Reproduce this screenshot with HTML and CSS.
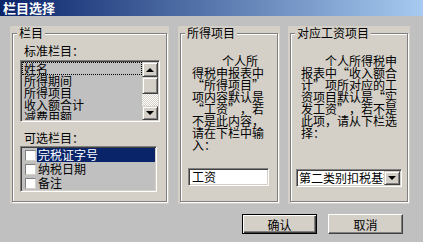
FILE: index.html
```html
<!DOCTYPE html>
<html lang="zh-CN">
<head>
    <meta charset="UTF-8">
    <title>栏目选择</title>
    <link rel="stylesheet" href="styles.css">
</head>
<body>
<div class="window">
    <!-- Barra de título -->
    <div class="titlebar">栏目选择</div>

    <div class="panels">
        <!-- 栏目 -->
        <div class="panel panel-columns">
            <div class="group">
                <span class="legend">栏目</span>
                <div class="label">标准栏目：</div>
                <div class="listbox">
                    <ul class="items">
                        <li class="focus">姓名</li>
                        <li>所得期间</li>
                        <li>所得项目</li>
                        <li>收入额合计</li>
                        <li>减费用额</li>
                    </ul>
                    <div class="scrollbar">
                        <div class="sb-btn sb-up"><span class="arrow-up"></span></div>
                        <div class="sb-thumb"></div>
                        <div class="sb-track"></div>
                        <div class="sb-btn sb-down"><span class="arrow-down"></span></div>
                    </div>
                </div>
                <div class="label label-optional">可选栏目：</div>
                <div class="checklist">
                    <div class="check-item selected"><span class="box"></span><span class="check-text">完税证字号</span></div>
                    <div class="check-item"><span class="box"></span><span class="check-text">纳税日期</span></div>
                    <div class="check-item"><span class="box"></span><span class="check-text">备注</span></div>
                </div>
            </div>
        </div>

        <!-- 所得项目 -->
        <div class="panel panel-income">
            <div class="group">
                <span class="legend">所得项目</span>
                <p class="notes notes-income">个人所<br>得税申报表中<br><span class="qo">“</span>所得项目<span class="qc">”</span><br>项内容默认是<br><span class="qo">“</span>工资<span class="qc">”</span>，若<br>不是此内容，<br>请在下栏中输<br>入：</p>
                <div class="text-input">工资</div>
            </div>
        </div>

        <!-- 对应工资项目 -->
        <div class="panel panel-wage">
            <div class="group">
                <span class="legend">对应工资项目</span>
                <p class="notes notes-wage">个人所得税申<br>报表中<span class="qo">“</span>收入额合<br>计<span class="qc">”</span>项所对应的工<br>资项目默认是<span class="qo">“</span>实<br>发工资<span class="qc">”</span>，若不是<br>此项，请从下栏选<br>择：</p>
                <div class="combo">
                    <span class="combo-text">第二类别扣税基数</span>
                    <span class="combo-btn"><span class="arrow-down"></span></span>
                </div>
            </div>
        </div>
    </div>

    <!-- Botões -->
    <div class="actions">
        <button class="btn btn-default">确认</button>
        <button class="btn">取消</button>
    </div>
</div>
</body>
</html>
```

FILE: styles.css
```css
/* Geral */
body {
    margin: 0;
    background-color: #c0c0c0;
    font-family: "Noto Sans CJK SC", "Liberation Sans", sans-serif;
    font-size: 12px;
    line-height: 12px;
    color: #000;
}

.window {
    width: 423px;
    height: 242px;
    overflow: hidden;
}

.titlebar {
    height: 16px;
    line-height: 16px;
    padding-left: 3px;
    background: linear-gradient(to right, #0a246a, #a6caf0);
    color: #fff;
    font-size: 13px;
    font-weight: bold;
}

/* Painéis */
.panels {
    display: flex;
    margin-top: 10px;
    padding-left: 10px;
    height: 178px;
}

.panel {
    display: flex;
    box-sizing: border-box;
    background-color: #d4d0c8;
    padding: 7px 2px 2px 2px;
}

.panel-columns {
    width: 159px;
}

.panel-income {
    width: 102px;
    margin-left: 9px;
}

.panel-wage {
    width: 122px;
    margin-left: 8px;
}

.group {
    flex: 1;
    display: flex;
    flex-direction: column;
    align-items: flex-start;
    border: 1px solid #808080;
    box-shadow: inset 1px 1px 0 #fff, 1px 1px 0 #fff;
}

.legend {
    margin: -8px 0 0 4px;
    padding: 0 2px;
    line-height: 13px;
    background-color: #d4d0c8;
}

.label {
    margin: 6px 0 0 11px;
}

.label-optional {
    margin-top: 10px;
}

/* Campos afundados */
.listbox, .checklist, .text-input, .combo {
    box-sizing: border-box;
    border: 1px solid;
    border-color: #808080 #fff #fff #808080;
    box-shadow: inset 1px 1px 0 #404040, inset -1px -1px 0 #d4d0c8;
    padding: 1px;
}

.listbox {
    display: flex;
    margin: 3px 0 0 7px;
    width: 140px;
    height: 62px;
    background-color: #c0c0c0;
}

.items {
    flex: 1;
    list-style: none;
    margin: 0;
    padding: 0;
    overflow: hidden;
}

.items li {
    height: 12px;
    padding-left: 2px;
    white-space: nowrap;
}

.items li.focus {
    outline: 1px dotted #000;
    outline-offset: -1px;
    height: 13px;
    line-height: 13px;
}

/* Barra de rolagem */
.scrollbar {
    width: 16px;
    display: flex;
    flex-direction: column;
}

.sb-btn, .sb-thumb, .combo-btn {
    box-sizing: border-box;
    display: flex;
    align-items: center;
    justify-content: center;
    background-color: #d4d0c8;
    border: 1px solid;
    border-color: #d4d0c8 #404040 #404040 #d4d0c8;
    box-shadow: inset 1px 1px 0 #fff, inset -1px -1px 0 #808080;
}

.sb-up {
    height: 15px;
}

.sb-thumb {
    height: 17px;
}

.sb-track {
    flex: 1;
    background: repeating-conic-gradient(#d4d0c8 0 25%, #fff 0 50%) 0 0 / 2px 2px;
}

.sb-down {
    height: 14px;
}

.arrow-up, .arrow-down {
    width: 0;
    height: 0;
    border-left: 4px solid transparent;
    border-right: 4px solid transparent;
}

.arrow-up {
    border-bottom: 4px solid #000;
}

.arrow-down {
    border-top: 4px solid #000;
}

/* Lista de seleção */
.checklist {
    margin: 2px 0 0 7px;
    width: 137px;
    height: 46px;
    background-color: #c0c0c0;
}

.check-item {
    display: flex;
    align-items: center;
    height: 14px;
}

.box {
    box-sizing: border-box;
    width: 11px;
    height: 11px;
    margin: 0 1px 0 3px;
    background-color: #fff;
    border: 1px solid;
    border-color: #808080 #d4d0c8 #d4d0c8 #808080;
}

.check-text {
    flex: 1;
    height: 14px;
    line-height: 14px;
    padding-left: 1px;
}

.selected .check-text {
    background-color: #0a246a;
    color: #fff;
}

/* Textos explicativos */
.notes {
    margin: 16px 0 0 11px;
    white-space: nowrap;
}

/* aspas de largura inteira */
.qo, .qc {
    display: inline-block;
    width: 12px;
    text-indent: 0;
}

.qo {
    text-align: right;
}

.qc {
    text-align: left;
}

.notes-income {
    text-indent: 30px;
}

.notes-wage {
    margin-left: 10px;
    text-indent: 24px;
}

.text-input {
    margin: 17px 0 0 7px;
    width: 81px;
    height: 18px;
    padding-left: 3px;
    line-height: 14px;
    background-color: #fff;
}

.combo {
    display: flex;
    margin: 30px 0 0 5px;
    width: 106px;
    height: 18px;
    background-color: #fff;
}

.combo-text {
    flex: 1;
    overflow: hidden;
    white-space: nowrap;
    line-height: 14px;
    padding-left: 1px;
}

.combo-btn {
    width: 16px;
    height: 14px;
}

/* Botões */
.actions {
    display: flex;
    justify-content: flex-end;
    gap: 11px;
    margin-top: 10px;
    padding-right: 20px;
}

.btn {
    box-sizing: border-box;
    width: 75px;
    height: 20px;
    padding: 0;
    font-family: inherit;
    font-size: 12px;
    background-color: #d4d0c8;
    border: 1px solid;
    border-color: #fff #404040 #404040 #fff;
    box-shadow: inset -1px -1px 0 #808080;
    color: #000;
}

.btn-default {
    border-color: #000;
    box-shadow: inset 1px 1px 0 #fff, inset -1px -1px 0 #404040, inset -2px -2px 0 #808080;
}
```
